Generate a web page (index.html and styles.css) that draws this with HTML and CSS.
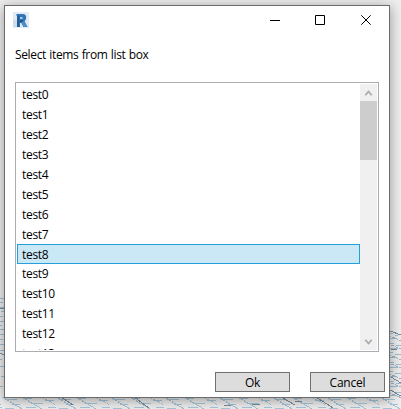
FILE: index.html
```
<!DOCTYPE html>
<html lang="en">
<head>
<meta charset="utf-8">
<title>Select items</title>
<link rel="stylesheet" href="styles.css">
</head>
<body>
<svg class="canvas" width="401" height="409" shape-rendering="crispEdges" fill="none" aria-hidden="true">
  <defs>
    <pattern id="floor" width="54" height="14" patternUnits="userSpaceOnUse" patternTransform="translate(2 396)">
      <path d="M0 1L22 14M18 0L42 14M38 0L54 9" stroke="#a5c3d6" stroke-dasharray="5 1 2 1"/>
      <path d="M4 3.500H15M22 2.500H30M29 7.500H41M10 8.500H18M43 4.500H52M24 11.500H34M3 12.500H12M46 11.500H54" stroke="#a5c7dc"/>
    </pattern>
    <pattern id="side" width="16" height="19" patternUnits="userSpaceOnUse" patternTransform="translate(388 332)">
      <path d="M0 1.500H5M7 3.500H14M1 6.500H9M11 8.500H16M0 11.500H6M8 13.500H15M2 16.500H10" stroke="#9dc1d7"/>
      <path d="M0 3L13 9M3 13L16 18" stroke="#a1b4c1" stroke-dasharray="3 1"/>
    </pattern>
  </defs>
  <path d="M0 396H401V409H0Z" fill="url(#floor)"/>
  <path d="M390 332L401 337V398H390Z" fill="url(#side)"/>
  <path d="M0 298.500H4M0 302.500H3M0 307.500H4M1 311.500H4M0 316.500H3M0 321.500H4M0 325.500H2M0 329.500H4M0 334.500H4M0 339.500H3M0 344.500H4M0 350.500H4M0 359.500H2M0 366.500H4M1 376.500H4M0 386.500H3" stroke="#9dc1d7"/>
  <path d="M0 308.500H4M0 353L4 355M61 397L73 405M134 397L149 408M281 397L295 405M316 397L333 408M390 331L401 335M391 349H397M391 377L401 383M295 401H302M252 404H260M224 405H231M390 390L401 396" stroke="#7b8d9b"/>
</svg>
<main class="window">
  <header class="titlebar">
    <svg class="logo" width="16" height="16" viewBox="0 0 16 16" aria-hidden="true">
      <path d="M0 0H16V16H0Z" fill="#e2eaf6"/>
      <path d="M0 8H4V15H0Z" fill="#cfdcef"/>
      <path d="M3.500 2H10Q13.200 2 13.200 5.500Q13.200 8 11.500 9L14.500 15H10.500L8 10.500H7V15H4V4H3.500Z" fill="#2f74b5"/>
      <path d="M4 4H6.500V15H4Z" fill="#245e98"/>
      <path d="M7 5H9.500V7H7Z" fill="#a9c8e6"/>
      <path d="M7 8.500H10L8.500 10.500H7Z" fill="#184a7d"/>
      <path d="M8.500 10.500L11 9.500L14.500 15H11Z" fill="#4b92cb"/>
    </svg>
    <svg class="controls" width="101" height="10" viewBox="0 0 101 10" fill="none" stroke="#000" aria-hidden="true">
      <path d="M0 5.500H10M45.500 .500H54.500V9.500H45.500Z"/>
      <path d="M91.300 .300L100.700 9.700M100.700 .300L91.300 9.700"/>
    </svg>
  </header>
  <p class="prompt">Select items from list box</p>
  <div class="listbox">
    <ul class="items">
      <li>test0</li>
      <li>test1</li>
      <li>test2</li>
      <li>test3</li>
      <li>test4</li>
      <li>test5</li>
      <li>test6</li>
      <li>test7</li>
      <li class="selected">test8</li>
      <li>test9</li>
      <li>test10</li>
      <li>test11</li>
      <li>test12</li>
      <li>test13</li>
    </ul>
    <div class="scrollbar">
      <svg class="arrow" width="17" height="17" fill="none" stroke="#a9a9a9" stroke-width="1.700"><path d="M5.300 11.300L8.500 7.500L11.700 11.300"/></svg>
      <div class="thumb"></div>
      <svg class="arrow" width="17" height="17" fill="none" stroke="#a9a9a9" stroke-width="1.700"><path d="M5.300 6.700L8.500 10.500L11.700 6.700"/></svg>
    </div>
  </div>
  <footer class="actions">
    <button type="button">Ok</button>
    <button type="button">Cancel</button>
  </footer>
</main>
</body>
</html>
```
FILE: styles.css
```
* {
  box-sizing: border-box;
}

body {
  margin: 0;
  width: 401px;
  height: 409px;
  padding: 5px 0 0 4px;
  overflow: hidden;
  background: #eee;
  color: #000;
  font: 12px/16px "Open Sans", "Noto Sans", sans-serif;
}

.canvas {
  position: absolute;
  top: 0;
  left: 0;
}

.window {
  position: relative;
  display: flex;
  flex-direction: column;
  width: 386px;
  height: 393px;
  border: 1px solid #6b6b6b;
  background: #fff;
  box-shadow: 0 2px 12px rgba(0, 0, 0, .38);
}

.titlebar {
  display: flex;
  justify-content: space-between;
  align-items: flex-start;
  height: 41px;
  padding: 6px 18px 0 8px;
}

.controls {
  margin-top: 3px;
}

.prompt {
  margin: 0 0 19px 10px;
  letter-spacing: -.35px;
  word-spacing: .5px;
}

.listbox {
  display: flex;
  width: 364px;
  height: 270px;
  margin-left: 10px;
  padding: 1px;
  border: 1px solid #abadb3;
}

.items {
  flex: 1;
  height: 266px;
  margin: 0;
  padding: 0;
  overflow: hidden;
  list-style: none;
}

.items li {
  height: 19.95px;
  padding: 2px 4px 0;
  border: 1px solid transparent;
  letter-spacing: -.3px;
}

.items .selected {
  height: 20.4px;
  margin-bottom: -.45px;
  border-color: #26a0da;
  background: #cbe8f6;
}

.scrollbar {
  display: flex;
  flex-direction: column;
  width: 17px;
  background: #f0f0f0;
}

.thumb {
  height: 59px;
  margin-bottom: auto;
  background: #cdcdcd;
}

.actions {
  display: flex;
  justify-content: flex-end;
  gap: 20px;
  margin: 20px 4px 0 0;
}

.actions button {
  width: 75px;
  height: 20px;
  padding: 1px 0 0;
  border: 1px solid #707070;
  background: #ddd;
  color: #000;
  font: inherit;
  letter-spacing: -.2px;
}
```
